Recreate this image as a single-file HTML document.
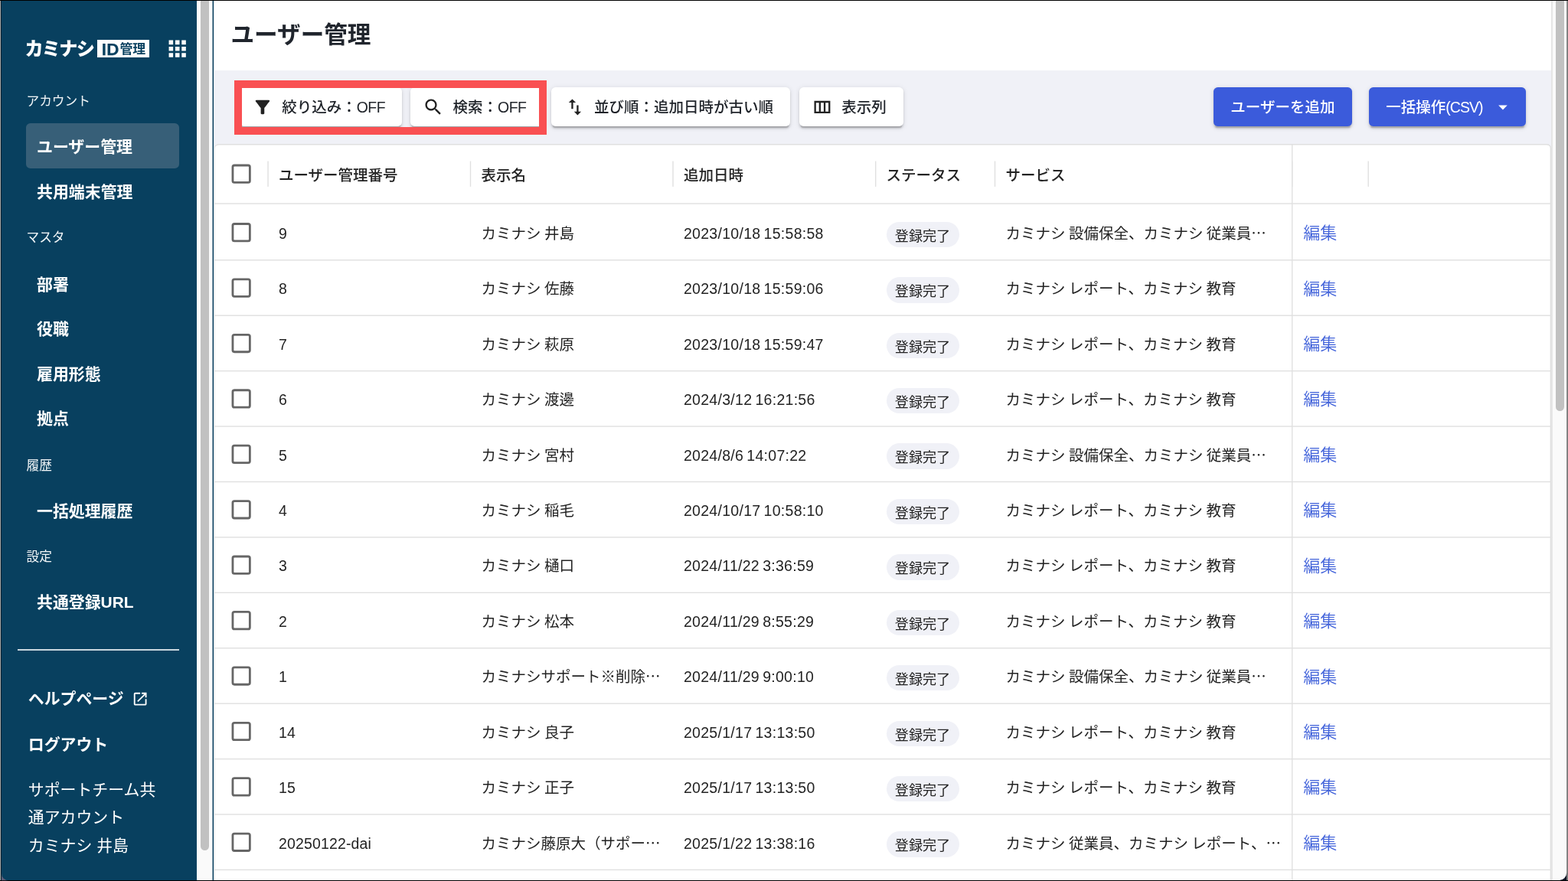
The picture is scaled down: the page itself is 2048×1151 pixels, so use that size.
<!DOCTYPE html>
<html lang="ja">
<head>
<meta charset="utf-8">
<title>ユーザー管理</title>
<style>
*{box-sizing:border-box;margin:0;padding:0}
html,body{width:2048px;height:1151px;overflow:hidden;background:#fff}
body{position:relative;font-family:"Liberation Sans","Noto Sans CJK JP",sans-serif;color:#20252d;font-size:19.5px;-webkit-font-smoothing:antialiased}
.abs{position:absolute}
/* window frame */
#top{left:0;top:0;width:2048px;height:1px;background:#000;z-index:50}
#bottom{left:0;top:1150px;width:2048px;height:1px;background:#000;z-index:50}
#l1{left:0;top:1px;width:1px;height:1149px;background:#a9a9a9;z-index:49}
#l2{left:1px;top:1px;width:1px;height:1149px;background:#02202f;z-index:49}
#r1{left:2046px;top:1px;width:2px;height:1149px;background:linear-gradient(90deg,#9a9a9a,#6f6f6f);z-index:49}
/* sidebar */
#side{left:2px;top:1px;width:255px;height:1149px;background:#08405f;color:#fff}
#sbar{left:257px;top:1px;width:21px;height:1149px;background:#fafafa}
#sbar i{position:absolute;left:5px;top:-10px;width:11px;height:1120px;border-radius:6px;background:#c1c1c1}
#pbar{left:2025.6px;top:1px;width:20.4px;height:1149px;background:#fafafa;border-left:2px solid #e6e6e6}
#pbar i{position:absolute;left:4.6px;top:-10px;width:11px;height:546px;border-radius:6px;background:#c1c1c1}
.sec{position:absolute;left:34.5px;font-size:16.7px;line-height:24px;color:#f2f6f8;font-weight:400;white-space:nowrap}
.item{position:absolute;left:32px;width:200.2px;height:58.6px;border-radius:5.6px;padding-left:14px;font-size:20.9px;font-weight:700;line-height:62.4px;white-space:nowrap;color:#fff}
.item.sel{background:#375f78}
.foot{position:absolute;left:36.8px;font-size:20.9px;line-height:36.5px;white-space:nowrap;color:#fff}
#divider{left:23px;top:848.2px;width:211px;height:1.4px;background:#c9d6de}
/* logo */
#logo{left:32.4px;top:45px;height:38px;line-height:38px;font-size:24.2px;font-weight:900;color:#fff;white-space:nowrap;letter-spacing:-1.75px}
#idbox{left:127.2px;top:52px;width:68.2px;height:23px;background:#fff;color:#08405f;white-space:nowrap;line-height:23px;font-weight:700}
#idbox .id{position:absolute;left:5.6px;top:0.6px;font-size:22.4px;-webkit-text-stroke:.25px #08405f;letter-spacing:.2px}
#idbox .kn{position:absolute;left:29.3px;top:0.9px;font-size:16.9px}
/* main */
#title{left:301.5px;top:23px;font-size:30.6px;font-weight:700;line-height:44px;white-space:nowrap;color:#20252d}
#tool{left:280.2px;top:92.3px;width:1748px;height:1060px;background:#f0f1f7}
.btn{position:absolute;top:114.4px;height:50.8px;border-radius:5.6px;background:#fff;color:#1f2329;font-size:19.5px;font-weight:500;line-height:50.8px;white-space:nowrap;box-shadow:0 4.2px 1.4px -2.8px rgba(0,0,0,.17),0 2.8px 2.8px 0 rgba(0,0,0,.12),0 1.4px 7px 0 rgba(0,0,0,.11)}
.btn svg{position:absolute;left:16.5px;top:11.5px;width:27.9px;height:27.9px;fill:#222}
.btn span{position:absolute;left:55.7px;top:1px}
.btn.blue{background:#3b5bdb;color:#fff}
.btn.blue span{left:22.3px}
#red{left:306.2px;top:104.5px;width:407.6px;height:71.3px;border:10px solid #f95052;z-index:5}
/* table */
#tbl{left:280.2px;top:187.6px;width:1746px;height:980px;background:#fff;box-shadow:inset 0 1.4px 0 0 #e0e0e0, inset 1px 0 0 0 #efefef, inset -1.4px 0 0 0 #e0e0e0;border-radius:5.6px 5.6px 0 0}
.th{position:absolute;top:189.6px;height:78px;line-height:78px;font-weight:500;font-size:19.5px;white-space:nowrap;color:#232323}
.row{position:absolute;left:280px;width:1746px;height:72.42px;white-space:nowrap;color:#232323}
.c{position:absolute;top:2.9px;height:69px;line-height:69px;font-size:19.5px;word-spacing:-1px}
.c1{left:84px}.c2{left:348.5px}.c3{left:613px}.c5{left:1033.5px}
.chip{position:absolute;left:877.5px;top:21.75px;width:95px;height:33.3px;border-radius:17px;background:#f0f1f7;font-size:18.1px;line-height:33.3px;text-align:center;color:#232323;padding-top:3px}
.edit{position:absolute;left:1422.2px;top:1.2px;height:71px;line-height:71px;font-size:22px;color:#4162da;font-weight:350}

#wrap{position:absolute;left:0;top:0;width:2048px;height:1151px;will-change:transform;overflow:hidden}
.btn b{font-weight:inherit;letter-spacing:-.6px}
.btn.blue b{letter-spacing:-1px}
.c3{letter-spacing:.28px;word-spacing:-1.5px}
.c1{letter-spacing:.15px}

</style>
</head>
<body>
<div id="wrap">
<div id="tool" class="abs"></div>
<div id="title" class="abs">ユーザー管理</div>

<div class="btn" style="left:312.6px;width:212.2px"><svg viewBox="0 0 24 24"><path d="M4.25 5.61C6.27 8.2 10 13 10 13v6c0 .55.45 1 1 1h2c.55 0 1-.45 1-1v-6s3.72-4.8 5.74-7.39c.51-.66.04-1.61-.79-1.61H5.04c-.83 0-1.3.95-.79 1.61"/></svg><span>絞り込み：<b>OFF</b></span></div>
<div class="btn" style="left:535.9px;width:172.7px"><svg viewBox="0 0 24 24"><path d="M15.5 14h-.79l-.28-.27C15.41 12.59 16 11.11 16 9.5 16 5.91 13.09 3 9.5 3S3 5.91 3 9.5 5.91 16 9.5 16c1.610 0 3.090-.59 4.230-1.570l.27.28v.79l5 4.990L20.490 19zm-6 0C7.010 14 5 11.990 5 9.500S7.010 5 9.500 5 14 7.010 14 9.500 11.990 14 9.500 14"/></svg><span>検索：<b>OFF</b></span></div>
<div class="btn" style="left:720.2px;width:311.8px"><svg viewBox="0 0 24 24"><path d="M16 17.010V10h-2v7.010h-3L15 21l4-3.990zM9 3 5 6.990h3V14h2V6.990h3z"/></svg><span>並び順：追加日時が古い順</span></div>
<div class="btn" style="left:1043.5px;width:136.7px"><svg viewBox="0 0 24 24"><path d="M3 5v14h18V5zm5.330 12H5V7h3.330zm5.340 0h-3.330V7h3.330zM19 17h-3.330V7H19z"/></svg><span>表示列</span></div>
<div class="btn blue" style="left:1585px;width:180.5px"><span>ユーザーを追加</span></div>
<div class="btn blue" style="left:1788px;width:204.8px"><span>一括操作<b>(CSV)</b></span><svg viewBox="0 0 24 24" style="left:160.6px;fill:#fff"><path d="m7 10 5 5 5-5z"/></svg></div>
<div id="red" class="abs"></div>

<div id="tbl" class="abs"></div>
<div class="th" style="left:364px">ユーザー管理番号</div>
<div class="th" style="left:628.5px">表示名</div>
<div class="th" style="left:893px">追加日時</div>
<div class="th" style="left:1157.5px">ステータス</div>
<div class="th" style="left:1313.5px">サービス</div>
<svg class="abs" id="lines" style="left:0;top:0" width="2048" height="1151" viewBox="0 0 2048 1151">
<rect x="280.3" y="265.30" width="1745.3" height="1.4" fill="#e0e0e0"/>
<rect x="280.3" y="339.10" width="1745.3" height="1.4" fill="#e0e0e0"/>
<rect x="280.3" y="411.52" width="1745.3" height="1.4" fill="#e0e0e0"/>
<rect x="280.3" y="483.94" width="1745.3" height="1.4" fill="#e0e0e0"/>
<rect x="280.3" y="556.36" width="1745.3" height="1.4" fill="#e0e0e0"/>
<rect x="280.3" y="628.78" width="1745.3" height="1.4" fill="#e0e0e0"/>
<rect x="280.3" y="701.20" width="1745.3" height="1.4" fill="#e0e0e0"/>
<rect x="280.3" y="773.62" width="1745.3" height="1.4" fill="#e0e0e0"/>
<rect x="280.3" y="846.04" width="1745.3" height="1.4" fill="#e0e0e0"/>
<rect x="280.3" y="918.46" width="1745.3" height="1.4" fill="#e0e0e0"/>
<rect x="280.3" y="990.88" width="1745.3" height="1.4" fill="#e0e0e0"/>
<rect x="280.3" y="1063.30" width="1745.3" height="1.4" fill="#e0e0e0"/>
<rect x="280.3" y="1135.72" width="1745.3" height="1.4" fill="#e0e0e0"/>
<rect x="349.35" y="210.5" width="1.4" height="33.4" fill="#e0e0e0"/>
<rect x="613.80" y="210.5" width="1.4" height="33.4" fill="#e0e0e0"/>
<rect x="878.30" y="210.5" width="1.4" height="33.4" fill="#e0e0e0"/>
<rect x="1143.00" y="210.5" width="1.4" height="33.4" fill="#e0e0e0"/>
<rect x="1298.80" y="210.5" width="1.4" height="33.4" fill="#e0e0e0"/>
<rect x="1687.00" y="210.5" width="1.4" height="33.4" fill="#e0e0e0"/>
<rect x="1786.50" y="210.5" width="1.4" height="33.4" fill="#e0e0e0"/>
<rect x="1687" y="189" width="1.4" height="962" fill="#e0e0e0"/>
<rect x="303.95" y="216.00" width="22.4" height="22.4" rx="2.2" fill="#fff" stroke="#666" stroke-width="2.8"/>
<rect x="303.95" y="292.50" width="22.4" height="22.4" rx="2.2" fill="#fff" stroke="#666" stroke-width="2.8"/>
<rect x="303.95" y="364.92" width="22.4" height="22.4" rx="2.2" fill="#fff" stroke="#666" stroke-width="2.8"/>
<rect x="303.95" y="437.34" width="22.4" height="22.4" rx="2.2" fill="#fff" stroke="#666" stroke-width="2.8"/>
<rect x="303.95" y="509.76" width="22.4" height="22.4" rx="2.2" fill="#fff" stroke="#666" stroke-width="2.8"/>
<rect x="303.95" y="582.18" width="22.4" height="22.4" rx="2.2" fill="#fff" stroke="#666" stroke-width="2.8"/>
<rect x="303.95" y="654.60" width="22.4" height="22.4" rx="2.2" fill="#fff" stroke="#666" stroke-width="2.8"/>
<rect x="303.95" y="727.02" width="22.4" height="22.4" rx="2.2" fill="#fff" stroke="#666" stroke-width="2.8"/>
<rect x="303.95" y="799.44" width="22.4" height="22.4" rx="2.2" fill="#fff" stroke="#666" stroke-width="2.8"/>
<rect x="303.95" y="871.86" width="22.4" height="22.4" rx="2.2" fill="#fff" stroke="#666" stroke-width="2.8"/>
<rect x="303.95" y="944.28" width="22.4" height="22.4" rx="2.2" fill="#fff" stroke="#666" stroke-width="2.8"/>
<rect x="303.95" y="1016.70" width="22.4" height="22.4" rx="2.2" fill="#fff" stroke="#666" stroke-width="2.8"/>
<rect x="303.95" y="1089.12" width="22.4" height="22.4" rx="2.2" fill="#fff" stroke="#666" stroke-width="2.8"/>
</svg>
<div class="row" style="top:268.05px">
<span class="c c1">9</span>
<span class="c c2">カミナシ 井島</span>
<span class="c c3">2023/10/18 15:58:58</span>
<span class="chip">登録完了</span>
<span class="c c5">カミナシ 設備保全、カミナシ 従業員⋯</span>
<a class="edit">編集</a>
</div>
<div class="row" style="top:340.47px">
<span class="c c1">8</span>
<span class="c c2">カミナシ 佐藤</span>
<span class="c c3">2023/10/18 15:59:06</span>
<span class="chip">登録完了</span>
<span class="c c5">カミナシ レポート、カミナシ 教育</span>
<a class="edit">編集</a>
</div>
<div class="row" style="top:412.89px">
<span class="c c1">7</span>
<span class="c c2">カミナシ 萩原</span>
<span class="c c3">2023/10/18 15:59:47</span>
<span class="chip">登録完了</span>
<span class="c c5">カミナシ レポート、カミナシ 教育</span>
<a class="edit">編集</a>
</div>
<div class="row" style="top:485.31px">
<span class="c c1">6</span>
<span class="c c2">カミナシ 渡邊</span>
<span class="c c3">2024/3/12 16:21:56</span>
<span class="chip">登録完了</span>
<span class="c c5">カミナシ レポート、カミナシ 教育</span>
<a class="edit">編集</a>
</div>
<div class="row" style="top:557.73px">
<span class="c c1">5</span>
<span class="c c2">カミナシ 宮村</span>
<span class="c c3">2024/8/6 14:07:22</span>
<span class="chip">登録完了</span>
<span class="c c5">カミナシ 設備保全、カミナシ 従業員⋯</span>
<a class="edit">編集</a>
</div>
<div class="row" style="top:630.15px">
<span class="c c1">4</span>
<span class="c c2">カミナシ 稲毛</span>
<span class="c c3">2024/10/17 10:58:10</span>
<span class="chip">登録完了</span>
<span class="c c5">カミナシ レポート、カミナシ 教育</span>
<a class="edit">編集</a>
</div>
<div class="row" style="top:702.57px">
<span class="c c1">3</span>
<span class="c c2">カミナシ 樋口</span>
<span class="c c3">2024/11/22 3:36:59</span>
<span class="chip">登録完了</span>
<span class="c c5">カミナシ レポート、カミナシ 教育</span>
<a class="edit">編集</a>
</div>
<div class="row" style="top:774.99px">
<span class="c c1">2</span>
<span class="c c2">カミナシ 松本</span>
<span class="c c3">2024/11/29 8:55:29</span>
<span class="chip">登録完了</span>
<span class="c c5">カミナシ レポート、カミナシ 教育</span>
<a class="edit">編集</a>
</div>
<div class="row" style="top:847.41px">
<span class="c c1">1</span>
<span class="c c2">カミナシサポート※削除⋯</span>
<span class="c c3">2024/11/29 9:00:10</span>
<span class="chip">登録完了</span>
<span class="c c5">カミナシ 設備保全、カミナシ 従業員⋯</span>
<a class="edit">編集</a>
</div>
<div class="row" style="top:919.83px">
<span class="c c1">14</span>
<span class="c c2">カミナシ 良子</span>
<span class="c c3">2025/1/17 13:13:50</span>
<span class="chip">登録完了</span>
<span class="c c5">カミナシ レポート、カミナシ 教育</span>
<a class="edit">編集</a>
</div>
<div class="row" style="top:992.25px">
<span class="c c1">15</span>
<span class="c c2">カミナシ 正子</span>
<span class="c c3">2025/1/17 13:13:50</span>
<span class="chip">登録完了</span>
<span class="c c5">カミナシ レポート、カミナシ 教育</span>
<a class="edit">編集</a>
</div>
<div class="row" style="top:1064.67px">
<span class="c c1">20250122-dai</span>
<span class="c c2">カミナシ藤原大（サポー⋯</span>
<span class="c c3">2025/1/22 13:38:16</span>
<span class="chip">登録完了</span>
<span class="c c5">カミナシ 従業員、カミナシ レポート、⋯</span>
<a class="edit">編集</a>
</div>

<div id="side" class="abs"></div>
<div id="logo" class="abs">カミナシ</div>
<div id="idbox" class="abs"><span class="id">ID</span><span class="kn">管理</span></div>
<svg class="abs" style="left:214.6px;top:46.7px;width:33.4px;height:33.4px" viewBox="0 0 24 24"><path fill="#fff" d="M4 8h4V4H4zm6 12h4v-4h-4zm-6 0h4v-4H4zm0-6h4v-4H4zm6 0h4v-4h-4zm6-10v4h4V4zm-6 4h4V4h-4zm6 6h4v-4h-4zm0 6h4v-4h-4z"/></svg>
<div class="sec" style="top:121.0px">アカウント</div>
<div class="item sel" style="left:34px;top:161px">ユーザー管理</div>
<div class="item" style="left:34px;top:219.7px">共用端末管理</div>
<div class="sec" style="top:299.0px">マスタ</div>
<div class="item" style="left:34px;top:340.5px">部署</div>
<div class="item" style="left:34px;top:399.0px">役職</div>
<div class="item" style="left:34px;top:457.5px">雇用形態</div>
<div class="item" style="left:34px;top:516.0px">拠点</div>
<div class="sec" style="top:597.0px">履歴</div>
<div class="item" style="left:34px;top:636.5px">一括処理履歴</div>
<div class="sec" style="top:716.0px">設定</div>
<div class="item" style="left:34px;top:756.0px">共通登録URL</div>
<div id="divider" class="abs"></div>
<div class="foot" style="top:895.4px;font-weight:700">ヘルプページ</div>
<svg class="abs" style="left:172.3px;top:901.6px;width:22.3px;height:22.3px" viewBox="0 0 24 24"><path fill="#fff" d="M19 19H5V5h7V3H5c-1.110 0-2 .9-2 2v14c0 1.100.890 2 2 2h14c1.100 0 2-.9 2-2v-7h-2zM14 3v2h3.590l-9.830 9.830 1.410 1.410L19 6.410V10h2V3z"/></svg>
<div class="foot" style="top:955.3px;font-weight:700">ログアウト</div>
<div class="foot" style="top:1013.5px">サポートチーム共<br>通アカウント<br>カミナシ 井島</div>

<div id="sbar" class="abs"><i></i></div>
<svg class="abs" style="left:0;top:0" width="2048" height="1151" viewBox="0 0 2048 1151"><rect x="277.55" y="1" width="1.6" height="1149" fill="#0a3f5e"/></svg>
<div id="pbar" class="abs"><i></i></div>
<div id="top" class="abs"></div>
<div id="bottom" class="abs"></div>
<div id="l1" class="abs"></div>
<div id="l2" class="abs"></div>
<div id="r1" class="abs"></div>
<svg class="abs" style="left:0;top:0;z-index:60" width="2048" height="1151" viewBox="0 0 2048 1151"><path d="M2,1141 A9,9 0 0 0 11,1150.2 L2,1150.2 Z" fill="#5c5c78"/><path d="M2046.2,1140 A10,10 0 0 1 2036,1150.2 L2046.2,1150.2 Z" fill="#0b1222"/></svg>

</div>
</body>
</html>
